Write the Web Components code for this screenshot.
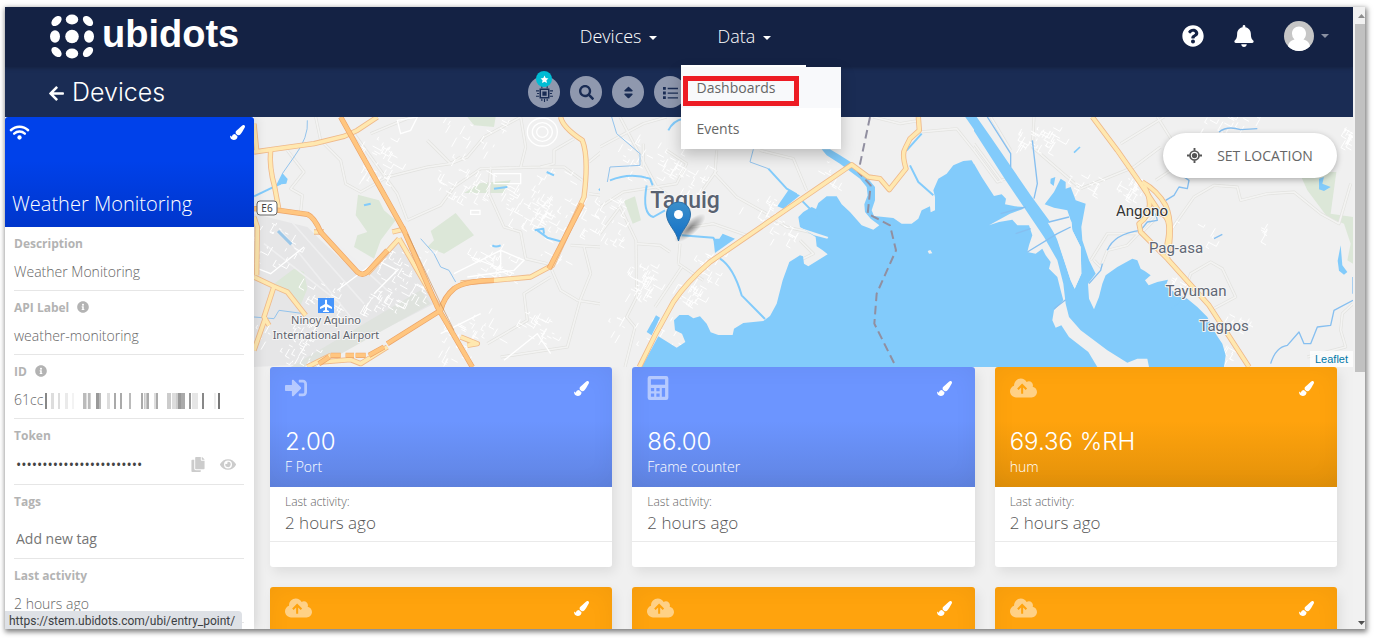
<!DOCTYPE html>
<html lang="en">
<head>
<meta charset="utf-8">
<title>Ubidots - Devices</title>
<style>
  body { margin: 0; background: #fff; font-family: "Open Sans", "Noto Sans", sans-serif; color: #666; }
</style>
</head>
<body>
<ubi-window>
  <ubi-header slot="header"></ubi-header>
  <ubi-subheader slot="subheader" heading="Devices"></ubi-subheader>
  <ubi-sidebar slot="sidebar" name="Weather Monitoring">
    <ubi-field label="Description">Weather Monitoring</ubi-field>
    <ubi-field label="API Label" info>weather-monitoring</ubi-field>
    <ubi-field label="ID" info>61cc<ubi-redaction></ubi-redaction></ubi-field>
    <ubi-field label="Token" size="medium"><ubi-token></ubi-token></ubi-field>
    <ubi-field label="Tags" size="large"><ubi-tag-input></ubi-tag-input></ubi-field>
    <ubi-field label="Last activity">2 hours ago</ubi-field>
  </ubi-sidebar>
  <ubi-map slot="map"></ubi-map>
  <ubi-card icon="signin" value="2.00" name="F Port" activity="2 hours ago" tone="blue"></ubi-card>
  <ubi-card icon="calculator" value="86.00" name="Frame counter" activity="2 hours ago" tone="blue"></ubi-card>
  <ubi-card icon="cloud" value="69.36 %RH" name="hum" activity="2 hours ago" tone="orange"></ubi-card>
  <ubi-card icon="cloud" tone="orange"></ubi-card>
  <ubi-card icon="cloud" tone="orange"></ubi-card>
  <ubi-card icon="cloud" tone="orange"></ubi-card>
</ubi-window>

<script>
const define = (name, render) => customElements.define(name, class extends HTMLElement {
  connectedCallback() {
    if (this.shadowRoot) return;
    const root = this.attachShadow({ mode: "open" });
    const t = document.createElement("template");
    t.innerHTML = render(this);
    root.append(t.content.cloneNode(true));
  }
});

const icons = {
  help: ["512 512", '<path d="M504 256c0 136.997-111.043 248-248 248S8 392.997 8 256C8 119.083 119.043 8 256 8s248 111.083 248 248zM262.655 90c-54.497 0-89.255 22.957-116.549 63.758-3.536 5.286-2.353 12.415 2.715 16.258l34.699 26.31c5.205 3.947 12.621 3.008 16.665-2.122 17.864-22.658 30.113-35.797 57.303-35.797 20.429 0 45.698 13.148 45.698 32.958 0 14.976-12.363 22.667-32.534 33.976C247.128 238.528 216 254.941 216 296v4c0 6.627 5.373 12 12 12h56c6.627 0 12-5.373 12-12v-1.333c0-28.462 83.186-29.647 83.186-106.667 0-58.002-60.165-102-116.531-102zM256 338c-25.365 0-46 20.635-46 46 0 25.364 20.635 46 46 46s46-20.636 46-46c0-25.365-20.635-46-46-46z"/>'],
  bell: ["448 512", '<path d="M224 512c35.32 0 63.97-28.65 63.97-64H160.03c0 35.35 28.65 64 63.97 64zm215.39-149.71c-19.32-20.76-55.47-51.99-55.47-154.29 0-77.7-54.48-139.9-127.94-155.16V32c0-17.67-14.32-32-31.98-32s-31.98 14.33-31.98 32v20.84C118.56 68.1 64.08 130.3 64.08 208c0 102.3-36.15 133.53-55.47 154.29-6 6.45-8.66 14.16-8.61 21.71.11 16.4 12.98 32 32.1 32h383.8c19.12 0 32-15.6 32.1-32 .05-7.55-2.61-15.27-8.61-21.71z"/>'],
  back: ["448 512", '<path d="M257.5 445.1l-22.2 22.2c-9.4 9.4-24.6 9.4-33.9 0L7 273c-9.4-9.4-9.4-24.6 0-33.9L201.4 44.7c9.4-9.4 24.6-9.4 33.9 0l22.2 22.2c9.5 9.5 9.3 25-.4 34.3L136.6 216H424c13.3 0 24 10.7 24 24v32c0 13.3-10.7 24-24 24H136.6l120.5 114.8c9.8 9.3 10 24.8.4 34.3z"/>'],
  search: ["512 512", '<path d="M505 442.7L405.3 343c-4.5-4.5-10.6-7-17-7H372c27.6-35.3 44-79.7 44-128C416 93.1 322.9 0 208 0S0 93.1 0 208s93.1 208 208 208c48.3 0 92.7-16.4 128-44v16.3c0 6.4 2.5 12.5 7 17l99.7 99.7c9.4 9.4 24.6 9.4 33.9 0l28.3-28.3c9.4-9.4 9.4-24.6.1-34zM208 336c-70.7 0-128-57.2-128-128 0-70.7 57.2-128 128-128 70.7 0 128 57.2 128 128 0 70.7-57.2 128-128 128z"/>'],
  sort: ["320 512", '<path d="M41 288h238c21.4 0 32.1 25.9 17 41L177 448c-9.4 9.4-24.6 9.4-33.9 0L24 329c-15.1-15.1-4.4-41 17-41zm255-105L177 64c-9.4-9.4-24.6-9.4-33.9 0L24 183c-15.1 15.1-4.4 41 17 41h238c21.4 0 32.1-25.9 17-41z"/>'],
  list: ["16 16", '<path d="M0 2h3v3H0zM0 7h3v3H0zM0 12h3v3H0zM5 3h11v1.4H5zM5 8h11v1.4H5zM5 13h11v1.4H5z"/>'],
  chip: ["16 16", '<path fill="none" stroke="currentColor" stroke-width="1.4" d="M4 4h8v8H4z"/><path d="M6 6h4v4H6zM0 5h3v1H0zM0 10h3v1H0zM1 7.500h2v1H1zM13 5h3v1h-3zM13 10h3v1h-3zM13 7.500h2v1h-2zM5 0h1v3H5zM10 0h1v3h-1zM5 13h1v2H5zM10 13h1v2h-1zM7.500 13h1v3h-1z"/>'],
  star: ["16 16", '<path d="M8 1l2.100 4.500 4.900.6-3.600 3.400.9 4.900L8 12l-4.300 2.400.9-4.900L1 6.100l4.900-.6z"/>'],
  wifi: ["22 16", '<g fill="none" stroke="currentColor" stroke-width="2.600" stroke-linecap="round"><path d="M1.800 5.600c5.200-5 13.200-5 18.400 0M5.300 9.200c3.300-3 8.100-3 11.400 0"/></g><circle cx="11" cy="13.300" r="2.300"/>'],
  brush: ["512 512", '<path d="M167.02 309.34c-40.12 2.58-76.53 17.86-97.19 72.3-2.35 6.21-8 9.98-14.59 9.98-11.11 0-45.46-27.67-55.25-34.35C0 439.62 37.93 512 128 512c75.86 0 128-43.77 128-120.19 0-3.11-.65-6.08-.97-9.13l-88.01-73.34zM457.89 0c-15.16 0-29.37 6.71-40.21 16.45C213.27 199.05 192 203.34 192 257.09c0 13.7 3.25 26.76 8.73 38.7l63.82 53.18c7.21 1.8 14.64 3.03 22.39 3.03 62.11 0 98.11-45.47 211.16-256.46 7.38-14.35 13.9-29.85 13.9-45.99C512 20.64 486 0 457.89 0z"/>'],
  info: ["512 512", '<path d="M256 8C119.043 8 8 119.083 8 256c0 136.997 111.043 248 248 248s248-111.003 248-248C504 119.083 392.957 8 256 8zm0 110c23.196 0 42 18.804 42 42s-18.804 42-42 42-42-18.804-42-42 18.804-42 42-42zm56 254c0 6.627-5.373 12-12 12h-88c-6.627 0-12-5.373-12-12v-24c0-6.627 5.373-12 12-12h12v-64h-12c-6.627 0-12-5.373-12-12v-24c0-6.627 5.373-12 12-12h64c6.627 0 12 5.373 12 12v100h12c6.627 0 12 5.373 12 12v24z"/>'],
  copy: ["448 512", '<path d="M320 448v40c0 13.255-10.745 24-24 24H24c-13.255 0-24-10.745-24-24V120c0-13.255 10.745-24 24-24h72v296c0 30.879 25.121 56 56 56h168zm0-344V0H152c-13.255 0-24 10.745-24 24v368c0 13.255 10.745 24 24 24h272c13.255 0 24-10.745 24-24V128H344c-13.2 0-24-10.8-24-24zm120.971-31.029L375.029 7.029A24 24 0 0 0 358.059 0H352v96h96v-6.059a24 24 0 0 0-7.029-16.97z"/>'],
  eye: ["576 512", '<path d="M572.52 241.4C518.29 135.59 410.93 64 288 64S57.68 135.64 3.48 241.41a32.35 32.35 0 0 0 0 29.19C57.71 376.41 165.07 448 288 448s230.32-71.64 284.52-177.41a32.35 32.35 0 0 0 0-29.19zM288 400a144 144 0 1 1 144-144 143.93 143.93 0 0 1-144 144zm0-240a95.31 95.31 0 0 0-25.31 3.79 47.85 47.85 0 0 1-66.9 66.9A95.78 95.78 0 1 0 288 160z"/>'],
  signin: ["512 512", '<path d="M416 448h-84c-6.6 0-12-5.4-12-12v-40c0-6.6 5.4-12 12-12h84c17.7 0 32-14.3 32-32V160c0-17.7-14.3-32-32-32h-84c-6.6 0-12-5.4-12-12V76c0-6.6 5.4-12 12-12h84c53 0 96 43 96 96v192c0 53-43 96-96 96zm-47-209L201 71c-15-15-41-4.5-41 17v96H24c-13.3 0-24 10.7-24 24v96c0 13.3 10.7 24 24 24h136v96c0 21.5 26 32 41 17l168-168c9.3-9.4 9.3-24.6 0-34z"/>'],
  calculator: ["19 22", '<path fill-rule="evenodd" d="M2 0h15a2 2 0 0 1 2 2v18a2 2 0 0 1-2 2H2a2 2 0 0 1-2-2V2a2 2 0 0 1 2-2zM3 3v5h13V3zM3 11v3h3v-3zM8 11v3h3v-3zM13 11v8h3v-8zM3 16v3h3v-3zM8 16v3h3v-3z"/>'],
  cloud: ["640 512", '<path fill-rule="evenodd" d="M537.600 226.600c4.100-10.700 6.400-22.400 6.400-34.600 0-53-43-96-96-96-19.700 0-38.100 6-53.300 16.200C367 64.200 315.300 32 256 32c-88.400 0-160 71.600-160 160 0 2.700.1 5.400.2 8.100C40.200 219.800 0 273.200 0 336c0 79.500 64.500 144 144 144h368c70.700 0 128-57.300 128-128 0-61.900-44-113.600-102.400-125.400zM288 152l118 118-34 34-60-60v146h-48V244l-60 60-34-34z"/>'],
  target: ["16 16", '<path d="M7 0h2v3H7zM7 13h2v3H7zM0 7h3v2H0zM13 7h3v2h-3z"/><circle cx="8" cy="8" r="4.800" fill="none" stroke="currentColor" stroke-width="1.800"/><circle cx="8" cy="8" r="2.800"/>'],
  avatar: ["30 30", '<circle cx="15" cy="15" r="15" fill="#c6c6c6"/><path fill="#fff" d="M15 5.500c4 0 7 3 7 7 0 2.500-1 4.500-2.500 6 4 .8 6 3.500 6.500 6.800A15 15 0 0 1 15 30 15 15 0 0 1 4 25.300c.5-3.300 2.500-6 6.500-6.800A8 8 0 0 1 8 12.500c0-4 3-7 7-7z"/>']
};
define("ubi-icon", el => {
  const [box, body] = icons[el.getAttribute("name")];
  return `<style>:host{display:inline-flex;flex:none}svg{width:100%;height:100%;display:block;fill:currentColor}</style>
  <svg viewBox="0 0 ${box}" aria-hidden="true">${body}</svg>`;
});

define("ubi-window", () => `<style>
  :host{display:block;height:100vh;box-sizing:border-box;padding:7px 9px 9px 5px;background:#fff}
  .frame{position:relative;display:grid;grid-template-columns:minmax(0,1fr) 12px;height:100%;box-shadow:1px 2px 5px 1px rgba(0,0,0,.5);background:#f0f0f0}
  .page{display:flex;flex-direction:column;min-height:0;overflow:hidden}
  .work{flex:1;min-height:0;display:grid;grid-template-columns:249px minmax(0,1fr)}
  .content{min-width:0;min-height:0;overflow:hidden}
  .cards{display:grid;grid-template-columns:repeat(3,minmax(0,1fr));gap:20px;padding:0 16px}
  .bar{display:flex;flex-direction:column;justify-content:space-between;background:#f1f1f1;padding-left:2px}
  .thumb{flex:0 0 56%;background:#c1c1c1}
  .bar svg{height:17px;width:100%;flex:none;fill:#8c8c8c}
  .rest{flex:1}
  .status{position:absolute;left:0;bottom:0;height:18px;padding:0 7px 0 4px;line-height:20px;border-radius:0 4px 0 0;background:#dee1e6;color:#3c4043;font-family:Roboto,sans-serif;font-size:12px;z-index:4}
  </style>
  <div class="frame"><div class="page"><slot name="header"></slot><slot name="subheader"></slot>
    <div class="work"><slot name="sidebar"></slot><main class="content"><slot name="map"></slot><div class="cards"><slot></slot></div></main></div></div>
    <div class="bar"><svg viewBox="0 0 10 17"><path d="M3 11l3.500-4L10 11z"/></svg><div class="thumb"></div><div class="rest"></div><svg viewBox="0 0 10 17"><path fill="#505050" d="M3 9h7l-3.500 4z"/></svg></div>
    <div class="status">https://stem.ubidots.com/ubi/entry_point/</div></div>`);

define("ubi-logo", () => `<style>
  :host{display:block}a{display:flex;align-items:center;gap:7px;color:#fff;text-decoration:none;font:700 38px/44px "Liberation Sans",sans-serif}
  svg{width:45px;height:45px;fill:#fff}span{padding-bottom:4px}</style>
  <a href="#"><svg viewBox="0 0 45 45" aria-hidden="true">
  <circle cx="22" cy="22.500" r="6.800"/><ellipse cx="22" cy="5.500" rx="6.200" ry="5"/><ellipse cx="22" cy="39.500" rx="6.200" ry="5"/><ellipse cx="5" cy="22.500" rx="5" ry="6.200"/><ellipse cx="39" cy="22.500" rx="5" ry="6.200"/>
  <ellipse cx="6.500" cy="7" rx="6" ry="4" transform="rotate(-45 6.500 7)"/><ellipse cx="38" cy="7" rx="6" ry="4" transform="rotate(45 38 7)"/><ellipse cx="6.500" cy="38" rx="6" ry="4" transform="rotate(45 6.500 38)"/><ellipse cx="38" cy="38" rx="6" ry="4" transform="rotate(-45 38 38)"/></svg><span>ubidots</span></a>`);

define("ubi-header", () => `<style>
  :host{display:grid;grid-template-columns:1fr auto 1fr;align-items:center;height:60px;box-sizing:border-box;background:#142244;position:relative;z-index:3;box-shadow:0 1px 4px rgba(0,0,0,.25);padding:0 24px 2px 45px}
  nav{display:flex;gap:60px;padding-right:28px}
  .item{position:relative}
  button{font:inherit;background:none;border:0;padding:0;color:inherit;display:flex;align-items:center}
  nav button{font-size:18px;line-height:28px;color:#fff;gap:8px;font-weight:300}
  .caret{border:4px solid transparent;border-top-color:currentColor;border-bottom:0;margin-top:3px}
  .user{display:flex;justify-content:flex-end;align-items:center;gap:30px;color:#fff}
  .user .acct{gap:7px}.user .caret{opacity:.5;margin:0}
  .help{width:22px;height:22px}.bell{width:20px;height:22px}.avatar{width:30px;height:30px}
  ubi-menu{position:absolute;left:-36px;top:45px}
  </style>
  <ubi-logo></ubi-logo>
  <nav><div class="item"><button>Devices <span class="caret"></span></button></div>
  <div class="item"><button aria-expanded="true">Data <span class="caret"></span></button><ubi-menu></ubi-menu></div></nav>
  <div class="user"><button aria-label="Help"><ubi-icon class="help" name="help"></ubi-icon></button><button aria-label="Notifications"><ubi-icon class="bell" name="bell"></ubi-icon></button><button class="acct" aria-label="Account"><ubi-icon class="avatar" name="avatar"></ubi-icon><span class="caret"></span></button></div>`);

define("ubi-menu", () => `<style>
  :host{display:block;width:160px;background:#fff;box-shadow:0 6px 14px rgba(0,0,0,.22)}
  :host::before{content:"";position:absolute;left:0;top:-2px;width:125px;height:2px;background:#fff}
  a{display:block;padding:0 15px;line-height:41px;font-size:14px;color:#666;text-decoration:none}
  a.active{background:#f8f9fb}
  .mark{position:absolute;left:2px;top:9px;width:106px;height:20px;border:5px solid #ed1c24}
  </style><a class="active" href="#dashboards">Dashboards</a><a href="#events">Events</a><div class="mark"></div>`);

define("ubi-subheader", el => `<style>
  :host{display:grid;grid-template-columns:1fr auto 1fr;align-items:center;height:50px;background:#1a2c54;color:#fff;padding:0 44px;position:relative;z-index:2}
  h1{margin:0;font:300 25px/32px Inter,"Open Sans",sans-serif}
  .title{display:flex;align-items:center;gap:8px;color:#fff;text-decoration:none}
  .title ubi-icon{width:15px;height:17px;padding-top:2px}
  .tools{display:flex;gap:10px;width:302px}
  button{position:relative;display:flex;align-items:center;justify-content:center;width:32px;height:32px;border:0;border-radius:50%;padding:0;background:#8f98ae;color:#1a2c54}
  .i{width:15px;height:15px}.chip{width:17px;height:17px;margin-top:2px}
  .badge{position:absolute;left:8px;top:-5px;width:16px;height:16px;border-radius:50%;background:#00bcd4;color:#fff;display:flex;align-items:center;justify-content:center}
  .badge ubi-icon{width:9px;height:9px}
  </style><a class="title" href="#devices"><ubi-icon name="back"></ubi-icon><h1>${el.getAttribute("heading")}</h1></a>
  <div class="tools"><button aria-label="Device type"><ubi-icon class="chip" name="chip"></ubi-icon><span class="badge"><ubi-icon name="star"></ubi-icon></span></button><button aria-label="Search"><ubi-icon class="i" name="search"></ubi-icon></button><button aria-label="Sort"><ubi-icon class="i" name="sort"></ubi-icon></button><button aria-label="List"><ubi-icon class="i" name="list"></ubi-icon></button></div>`);

define("ubi-sidebar", el => `<style>
  :host{display:block;min-height:0;background:#fff;box-shadow:0 0 12px rgba(0,0,0,.16);z-index:1;overflow:hidden;clip-path:inset(0 -20px 0 0)}
  header{display:flex;flex-direction:column;justify-content:space-between;height:110px;box-sizing:border-box;padding:8px 9px 8px 4px;background:linear-gradient(#0041ea 40%,#0036cc);border-radius:3px 3px 0 0;color:#fff}
  .top{display:flex;justify-content:space-between;color:#fff}
  .top button{display:flex;background:none;border:0;padding:0;color:inherit}
  .wifi{width:21px;height:15px}.brush{width:15px;height:15px}
  h2{margin:0 0 0 3px;font-size:20px;line-height:30px;font-weight:300}
  section{padding:0 10px 0 9px}
  </style><header><div class="top"><ubi-icon class="wifi" name="wifi"></ubi-icon><button aria-label="Change color"><ubi-icon class="brush" name="brush"></ubi-icon></button></div><h2>${el.getAttribute("name")}</h2></header><section><slot></slot></section>`);

define("ubi-field", el => `<style>
  :host{display:block;border-bottom:1px solid #e6e6e6;padding-top:6px}
  .label{display:flex;align-items:center;gap:8px;height:20px;font-size:12px;font-weight:700;color:#b3b3b3}
  .label ubi-icon{width:12px;height:12px}
  .value{display:flex;align-items:center;height:37px;font-size:14px;font-weight:300;color:#666}
  :host([size=medium]) .value{height:39px}
  :host([size=large]) .value{height:47px;box-sizing:border-box;padding-top:8px}
  </style><div class="label">${el.getAttribute("label")}${el.hasAttribute("info") ? '<ubi-icon name="info"></ubi-icon>' : ""}</div><div class="value"><slot></slot></div>`);

define("ubi-redaction", () => {
  const bars = [[0,6,"#888"],[18,9,"#ddd"],[39,6,"#ddd"],[60,9,"#eaeaea"],[81,6,"#f3f3f3"],[114,9,"#bbb"],[123,4,"#ddd"],[129,8,"#bbb"],[153,9,"#999"],[162,6,"#bbb"],[186,9,"#ddd"],[207,6,"#aaa"],[225,6,"#aaa"],[252,6,"#bbb"],[288,6,"#aaa"],[297,5,"#ccc"],[304,8,"#aaa"],[327,9,"#ddd"],[333,6,"#aaa"],[366,12,"#ccc"],[381,12,"#ddd"],[393,6,"#ccc"],[399,9,"#999"],[408,12,"#aaa"],[432,6,"#999"],[441,18,"#e6e6e6"],[471,6,"#888"],[507,6,"#eee"],[519,6,"#777"]];
  return `<style>:host{display:block;width:176px;height:16px;margin:3px 0 0 2px}svg{display:block;width:100%;height:100%}</style><svg viewBox="0 0 528 48" aria-hidden="true">${bars.map(b => `<rect x="${b[0]}" width="${b[1]}" height="48" fill="${b[2]}"/>`).join("")}</svg>`;
});

define("ubi-token", () => `<style>
  :host{display:flex;align-items:center;width:100%}
  input{flex:1;min-width:0;border:0;padding:0 0 0 2px;background:none;font:400 14px/20px "Open Sans",sans-serif;color:#444;outline:0}
  button{display:flex;background:none;border:0;padding:0;color:#ccc;margin-left:15px}
  .copy{width:14px;height:15px}.eye{width:16px;height:15px}
  button:last-child{margin-right:8px}
  </style><input type="password" aria-label="Token" value="BBFFabcdefghijklmnopqrst" readonly><button aria-label="Copy"><ubi-icon class="copy" name="copy"></ubi-icon></button><button aria-label="Show"><ubi-icon class="eye" name="eye"></ubi-icon></button>`);

define("ubi-tag-input", () => `<style>
  :host{display:block;width:100%}
  input{width:100%;box-sizing:border-box;border:0;padding:0 2px;background:none;font:400 14px/20px "Open Sans",sans-serif;outline:0}
  input::placeholder{color:#757575;opacity:1}</style><input aria-label="Tags" placeholder="Add new tag">`);

define("ubi-card", el => {
  const a = n => el.getAttribute(n) || "";
  return `<style>
  :host{display:block;height:200px;background:#fff;border-radius:3px;overflow:hidden;box-shadow:3px 5px 12px rgba(0,0,0,.08)}
  header{height:120px;box-sizing:border-box;padding:9px 15px 10px;display:flex;flex-direction:column;justify-content:space-between;color:#fff;background:linear-gradient(#6c95ff 45%,#6084e2);box-shadow:inset 0 0 24px rgba(0,0,0,.05)}
  :host([tone=orange]) header{background:linear-gradient(#ffa30d 45%,#e3910a)}
  .top{display:flex;justify-content:space-between}
  .kind{width:22px;height:24px;opacity:.5}
  .kind[name=cloud]{width:27px}
  .top button{display:flex;align-items:center;height:24px;border:0;background:none;padding:0 8px 0 0;color:inherit}
  .brush{width:15px;height:15px}
  .value{font:300 24px/30px Inter,"Open Sans",sans-serif}
  .name{font-size:14px;line-height:20px;font-weight:300}
  .body{padding:5px 15px 7px;height:42px;border-bottom:1px solid #eaeaea}
  .cap{font-size:12px;line-height:20px;font-weight:300}
  .act{font-size:17px;line-height:22px;font-weight:300;color:#555}
  </style><header><div class="top"><ubi-icon class="kind" name="${a("icon")}"></ubi-icon><button aria-label="Change color"><ubi-icon class="brush" name="brush"></ubi-icon></button></div>
  <div><div class="value">${a("value")}</div><div class="name">${a("name")}</div></div></header>
  ${a("activity") ? `<div class="body"><div class="cap">Last activity:</div><div class="act">${a("activity")}</div></div>` : ""}`;
});

/* Map geometry is drawn at three units per pixel, in three tiles. */
const lines = (list, w, edge, fill, inner) => {
  const p = list.map(d => `<path d="${d}"/>`).join("");
  return `<g fill="none" stroke-linejoin="round"><g stroke="${edge}" stroke-width="${w}">${p}</g><g stroke="${fill}" stroke-width="${inner}">${p}</g></g>`;
};
const minor = l => lines(l, 9, "#e2e2df", "#f3f3f2", 5);
const yellow = l => lines(l, 16, "#efb98a", "#ffe8b0", 11);
const orange = l => lines(l, 16, "#eda468", "#ffc680", 12);
const thin = (l, c, w) => `<g fill="none" stroke="${c}" stroke-width="${w}" stroke-linejoin="round">${l.map(d => `<path d="${d}"/>`).join("")}</g>`;
const streets = zones => {
  let s = 7, out = "";
  const r = () => (s = s * 16807 % 2147483647) / 2147483647;
  for (const [x, y, w, h, n] of zones) for (let i = 0; i < n; i++) {
    const a = r() < .5 ? .5 : 2.1, l = 6 + r() * 26;
    const dx = Math.cos(a) * l, dy = Math.sin(a) * l;
    out += `M${x + r() * w | 0} ${y + r() * h | 0}l${dx | 0} ${dy | 0}`;
    if (r() > .5) out += `l${dy * .6 | 0} ${-dx * .6 | 0}`;
  }
  return `<path d="${out}" fill="none" stroke="#fff" stroke-width="3"/>`;
};
define("ubi-map", () => {
  const west = `
    <path fill="#e6e6e7" d="M0 290L160 330 200 370 320 480 370 450 430 370 470 400 540 560 190 740 0 750z"/>
    <path fill="#dfe3de" d="M110 750L500 520 530 560 190 750z"/>
    <path fill="#dce7d8" d="M312 233L375 250 390 280 425 310 380 370 360 425 300 390 310 355 340 345 305 295zM530 342L605 288 660 355 570 410 520 390 540 370zM640 0h85l-5 30-60-5zM630 228l50-30 90-8-20 38zM60 500l60-45 30 10 10 50-20 50-30-35zM1112 250l35-12 15 70-20 12z"/>
    <path fill="#82cbfb" d="M85 168l16 18-4 14-30 3zM1200 610v45l-22-10z"/>
    ${thin(["M80 340L290 600", "M180 320L400 520", "M30 380L260 560", "M100 300L330 560"], "#efeff0", 5)}
    ${minor(["M185 0L200 70 260 130 275 200 320 225 400 180 520 150 590 140 640 120 690 60 800 0","M100 100L150 165 110 215 145 235 140 285","M520 70L590 140 620 120","M350 50L470 0","M300 50L430 230 460 310","M460 310L560 265 600 210 680 155 860 150 900 140 900 100 960 65","M710 150L705 230 750 330 800 345 815 425 880 440","M800 0L815 90 800 150","M860 150L930 150 985 190","M1200 0L1060 90 1005 135","M1005 230L1080 240 1200 205","M950 385L1040 390 1100 340 1130 290","M1040 260L1100 270 1145 340 1145 540 1100 590 1145 630 1120 750","M885 440L920 520 970 550 1100 570 1200 620","M990 390L1010 470 980 545 940 690 740 720","M890 480L810 530 820 610 700 680","M1080 150L1200 220"])}
    <path fill="none" stroke="#fff" stroke-width="4" d="M820 45a45 42 0 1 0 90 0a45 42 0 1 0-90 0M835 45a30 28 0 1 0 60 0a30 28 0 1 0-60 0M848 45a17 16 0 1 0 34 0a17 16 0 1 0-34 0M600 470L740 400 810 430 780 460 640 480M650 420L780 470M740 400V460M430 10L490 0 470 40 440 50zM720 170h80v30h-80zM650 280h28v12h-28zM0 450l50 20 100-80M250 520l120-90 60 30-70 70M560 650l120-60M750 730l100-80 40 60"/>
    ${streets([[330,60,90,130,35],[540,150,180,100,35],[750,200,150,130,55],[380,400,160,150,50],[10,620,190,120,40],[650,380,150,100,35],[330,520,120,60,25],[560,600,120,130,30],[640,570,260,110,30],[990,240,90,120,35],[840,140,120,300,35],[0,300,130,150,22],[560,0,260,130,20],[1060,330,130,220,22],[150,480,120,150,25]])}
    ${thin(["M160 10Q165 60 120 120L85 170","M500 365L540 410 560 450 585 460 605 495","M0 600L60 605 75 580 150 590","M1072 0L1090 40 1160 100 1160 140 1070 145 1062 190 1140 180 1200 190"], "#93c3ec", 3)}
    ${thin(["M0 238L80 200","M1035 220Q1070 180 1140 178T1195 215M1180 225Q1160 290 1200 305","M842 340L868 335 870 350M850 340L880 362 930 376","M715 385Q725 392 740 385","M878 165L900 175","M720 215L760 210","M330 265L350 260"], "#82cbfb", 6)}
    <path stroke="#9bc7e8" stroke-width="9" d="M72 342L112 382"/>
    ${yellow(["M0 105L50 98 180 80 270 58 310 40 370 0","M50 98Q45 150 62 210L75 280","M0 20L8 100M0 300L10 330 8 475","M0 480L60 508 100 525 155 595","M60 508L30 600 45 625M35 600L0 700","M435 365L340 470M435 365L560 580","M920 0Q925 30 985 70 1005 120 990 240L895 445 830 480 720 490 620 498","M160 750L230 715M200 735L290 728 320 740 400 690","M620 660L670 680 640 685","M180 345h30M415 345l40-10","M1155 750L1200 650"])}
    ${orange(["M260 0L450 340 550 570 655 750","M0 275L75 280 160 292Q180 300 200 345L310 465Q325 478 340 465L400 400","M720 490Q630 492 600 515 570 540 560 580L400 680","M985 260L885 455","M390 690L345 715M335 715h-30M300 715h-25M260 715h-30M225 720l-30 20"])}
    <path fill="none" stroke="#c98f58" stroke-width="2" d="M460 350L560 560 600 640"/>`;
  const middle = `
    <path fill="#dce7d8" d="M72 252L105 238 123 310 98 320z"/>
    ${minor(["M0 90L130 20 200 0","M60 0L170 210 200 230","M130 80V150M200 100L260 140 230 200 70 225 0 270","M350 100L345 170 410 240 500 290","M275 330L340 320 440 355","M235 440L240 380","M245 450L165 570","M0 350L60 270 108 370 110 540 80 600 105 630 75 750","M110 380L180 385 210 405","M235 440L310 490","M600 370L640 410 600 430M510 300L560 330 650 350","M820 0L900 20 960 10","M960 45L1070 35 1130 110 1200 210","M480 100L580 125 620 220","M300 230L350 160"])}
    ${streets([[10,210,70,170,20],[90,440,70,100,40],[230,500,80,60,25],[60,50,200,140,35],[250,140,120,90,16],[270,410,100,80,20],[520,310,70,60,15],[30,600,220,120,28],[430,230,110,80,15],[650,130,80,70,8]])}
    <g fill="#82cbfb">
    <path d="M125 750L175 658 230 692 256 675 246 650 225 640 222 610 238 594 265 594 280 604 300 598 320 620 332 646 355 654 398 654 402 635 430 618 490 612 510 597 530 560 548 490 568 435 600 415 609 418 612 440 625 448 683 412 668 400 650 388 647 360 600 330 595 300 610 285 635 270 648 276 655 258 680 238 710 238 725 262 750 285 785 325 820 338 838 325 812 305 795 285 793 262 803 235 800 210 780 185 720 140 680 115 665 97 690 97 720 115 760 140 800 180 825 210 825 250 815 280 822 297 880 303 905 320 935 320 955 305 965 280 990 268 992 286 1005 280 1005 240 1000 220 1015 185 1040 170 1060 145 1090 132 1115 130 1145 180 1182 237 1205 232 1218 245 1215 262 1245 268 1275 270 1267 277 1230 290 1167 325 1197 315 1237 308 1252 325 1287 325 1297 355 1287 385 1282 405 1307 410 1327 395 1337 415 1352 435 1347 455 1372 480 1382 520 1390 550 1362 580 1357 610 1367 632 1384 625 1407 660 1465 705 1492 750z"/>
    <path d="M532 268L565 220 600 235 550 275zM340 365L358 365 368 350 405 365 345 408zM140 645L168 595 180 602 155 655z"/></g>
    ${thin(["M245 355L340 362 350 380","M360 425Q400 450 425 535L495 606","M505 155L560 215 590 232M605 250L652 298","M140 205Q125 290 160 300L195 280M30 190Q90 165 150 185L158 205","M205 40Q220 10 250 5","M930 145L955 195 1000 235","M965 50L920 100"], "#82cbfb", 6)}
    ${thin(["M35 0L50 50 120 110 120 145 30 150 22 195","M460 97L450 135 505 155"], "#93c3ec", 3)}
    <path fill="none" stroke="#82cbfb" stroke-width="24" d="M1102-12L1150 56"/>
    <path fill="#f0f0f0" d="M983 402l8-3 6 10-10 1zM1168 327l32-20v8zM600 332l85 28-3 5-40-10z"/>
    ${thin(["M810 0L775 165 812 205 803 290 870 325 888 400 830 530 823 620 888 750"], "#918fa0", 6).replace("<path", '<path stroke-dasharray="26 14"')}
    ${yellow(["M118 750Q165 650 220 555 260 495 330 435L755 143 805 180 840 185 868 218 918 155Q905 110 915 95L930 65 958 40 955 0"])}`;
  const east = `
    <path fill="#dce7d8" d="M975 165H1087L1070 290 1137 300V440L1120 430 1130 380 1110 320 1060 300 1000 220z"/>
    ${minor(["M0 80L85 195M50 0L110 100M0 100L70 195 95 185","M180 0L175 90 320 215","M320 215L480 150 560 90","M440 80L570 0","M545 190L590 160","M350 430L400 350 500 350 540 310","M590 340L660 240 720 205 790 210 800 250 880 230 960 225 1040 290 1095 320 1130 200","M360 430L380 450 400 400 460 385 540 300","M640 500L650 470 710 435 745 455 785 540 710 580","M1137 560L1105 590 1100 640 1115 690 1000 720","M550 0L600 80"])}
    ${streets([[140,30,110,60,35],[280,170,100,60,14],[430,180,80,60,22],[600,310,130,90,10],[760,590,60,40,15],[590,470,50,40,8],[1110,30,25,50,14],[860,320,35,35,6],[760,680,60,60,7],[650,0,240,40,15]])}
    <g fill="#82cbfb">
    <path d="M-32 0L0 42 95 190 210 360 250 430 268 500 275 560 285 600 320 640 400 700 460 737 490 725 520 725 525 750H750L755 715 745 680 728 655 715 630 700 600 670 570 640 545 600 525 575 507 582 488 550 495 524 505 513 490 530 475 512 462 500 455 490 430 475 425 430 450 395 475 385 500 375 540 360 577 345 545 342 500 365 470 345 430 325 370 322 330 335 260 305 250 290 210 275 215 275 195 260 185 240 225 212 262 240 272 280 280 290 310 295 340 320 390 322 470 302 515 290 490 250 370 225 310 170 235 50 60 8 0z"/>
    <path d="M230 185l14-5-5 27-10-8zM1100 385l5 60 15 20-10 8-15-12-4-30zM1035 185l15-5-5 20 25 10-20 12-15-5z"/></g>
    <path fill="#f1f1f1" d="M250 365L222 318 280 298 293 315 295 340 320 390 322 470 302 515 290 490z"/>
    ${thin(["M40 0L110 110 110 150","M175 70L190 200 180 245","M80 290L155 270M125 350L170 335M160 405L250 350 290 330M225 315L285 300","M240 575L275 548M345 500L380 460 385 440","M400 400Q420 350 500 340L520 315 550 310 545 290","M575 250L600 235 615 210 640 215 645 190 630 180","M735 45Q760 25 800 38L850 35","M890 740Q905 690 940 685L975 645 990 680 1010 680 1030 630 1070 625 1080 580 1137 550M1137 480V530M720 365L745 352"], "#86bff0", 4)}
    ${thin(["M300 107L318 90","M625 540L595 575"], "#82cbfb", 5)}
    ${yellow(["M355 0L430 100 500 200 560 290Q600 300 575 400","M510 205Q550 280 495 320L500 345 580 425 705 565 825 750","M505 195Q550 220 575 265 600 320 580 425"])}`;
  return `<style>
    :host{display:block;position:relative;height:250px;background:#f0f0f0}
    svg.map{display:block;width:100%;height:100%}
    .lbl{paint-order:stroke;stroke:#f6f6f6;stroke-width:2px;stroke-linejoin:round}
    button{position:absolute;right:16px;top:16px;display:flex;align-items:center;justify-content:center;gap:15px;width:174px;height:45px;border:0;border-radius:23px;background:#fff;color:#666;font:400 14px/20px "Open Sans",sans-serif;box-shadow:0 2px 6px rgba(0,0,0,.28)}
    button ubi-icon{width:15px;height:15px;color:#555}
    .attr{position:absolute;right:0;bottom:0;padding:0 5px;background:rgba(255,255,255,.7);font:11px/16px "Liberation Sans",sans-serif}
    a{color:#0078a8;text-decoration:none}
  </style>
  <svg class="map" viewBox="0 0 1099 250" preserveAspectRatio="xMidYMid slice">
    <defs><linearGradient id="pin" x2="0" y2="1"><stop stop-color="#3b8fcb"/><stop offset="1" stop-color="#126fc6"/></linearGradient>
    <radialGradient id="sh"><stop stop-color="#000" stop-opacity=".45"/><stop offset="1" stop-color="#000" stop-opacity="0"/></radialGradient></defs>
    <g transform="scale(.333333)"><svg width="1152" height="750">${west}</svg><g transform="translate(1038)"><svg x="0" width="1122" height="750"><rect width="1122" height="750" fill="#f0f0f0"/>${middle}</svg></g>
    <g transform="translate(2160)"><svg width="1137" height="750"><rect width="1137" height="750" fill="#f0f0f0"/><g transform="translate(-1122)"><path fill="#82cbfb" d="M1110 120L1145 180 1182 237 1205 232 1218 245 1215 262 1245 268 1275 270 1267 277 1230 290 1167 325 1197 315 1237 308 1252 325 1287 325 1297 355 1287 385 1282 405 1307 410 1327 395 1337 415 1352 435 1347 455 1372 480 1382 520 1390 550 1362 580 1357 610 1367 632 1384 625 1407 660 1465 705 1492 750H1110z"/></g>${east}</svg></g></g>
    <g font-family="Noto Sans, sans-serif" font-size="11" fill="#5d626b" text-anchor="middle"><rect x="3" y="84" width="20" height="14" rx="3" fill="#fff" stroke="#666"/><text x="13" y="95" font-size="10" fill="#444">E6</text>
    <rect x="64" y="181" width="16" height="15" fill="#4795fb"/><path fill="#fff" d="M71 183q1-1 2 0v4l5 3v2l-5-2v3l2 1v1h-6v-1l2-1v-3l-5 2v-2l5-3z"/>
    <text class="lbl" x="72" y="207">Ninoy Aquino</text><text class="lbl" x="72" y="222">International Airport</text></g>
    <g font-family="Roboto, sans-serif" font-size="15" fill="#5f6674" text-anchor="middle"><text class="lbl" x="888" y="99" fill="#333">Angono</text><text class="lbl" x="922" y="136">Pag-asa</text><text class="lbl" x="942" y="179">Tayuman</text><text class="lbl" x="970" y="214">Tagpos</text>
    <text class="lbl" x="431" y="91" font-size="23" font-weight="500" fill="#596271">Taguig</text></g>
    <ellipse cx="436" cy="111" rx="20" ry="7" fill="url(#sh)" transform="rotate(-42 436 111)"/>
    <path fill="url(#pin)" stroke="#2c6fa7" d="M424.500 124C422 113 412.500 107 412.500 97a12 12 0 0 1 24 0C436.500 107 427 113 424.500 124z"/><circle cx="424.500" cy="97.500" r="4.500" fill="#fff"/>
  </svg>
  <button><ubi-icon name="target"></ubi-icon>SET LOCATION</button><div class="attr"><a href="#leaflet">Leaflet</a></div>`;
});
</script>
</body>
</html>
